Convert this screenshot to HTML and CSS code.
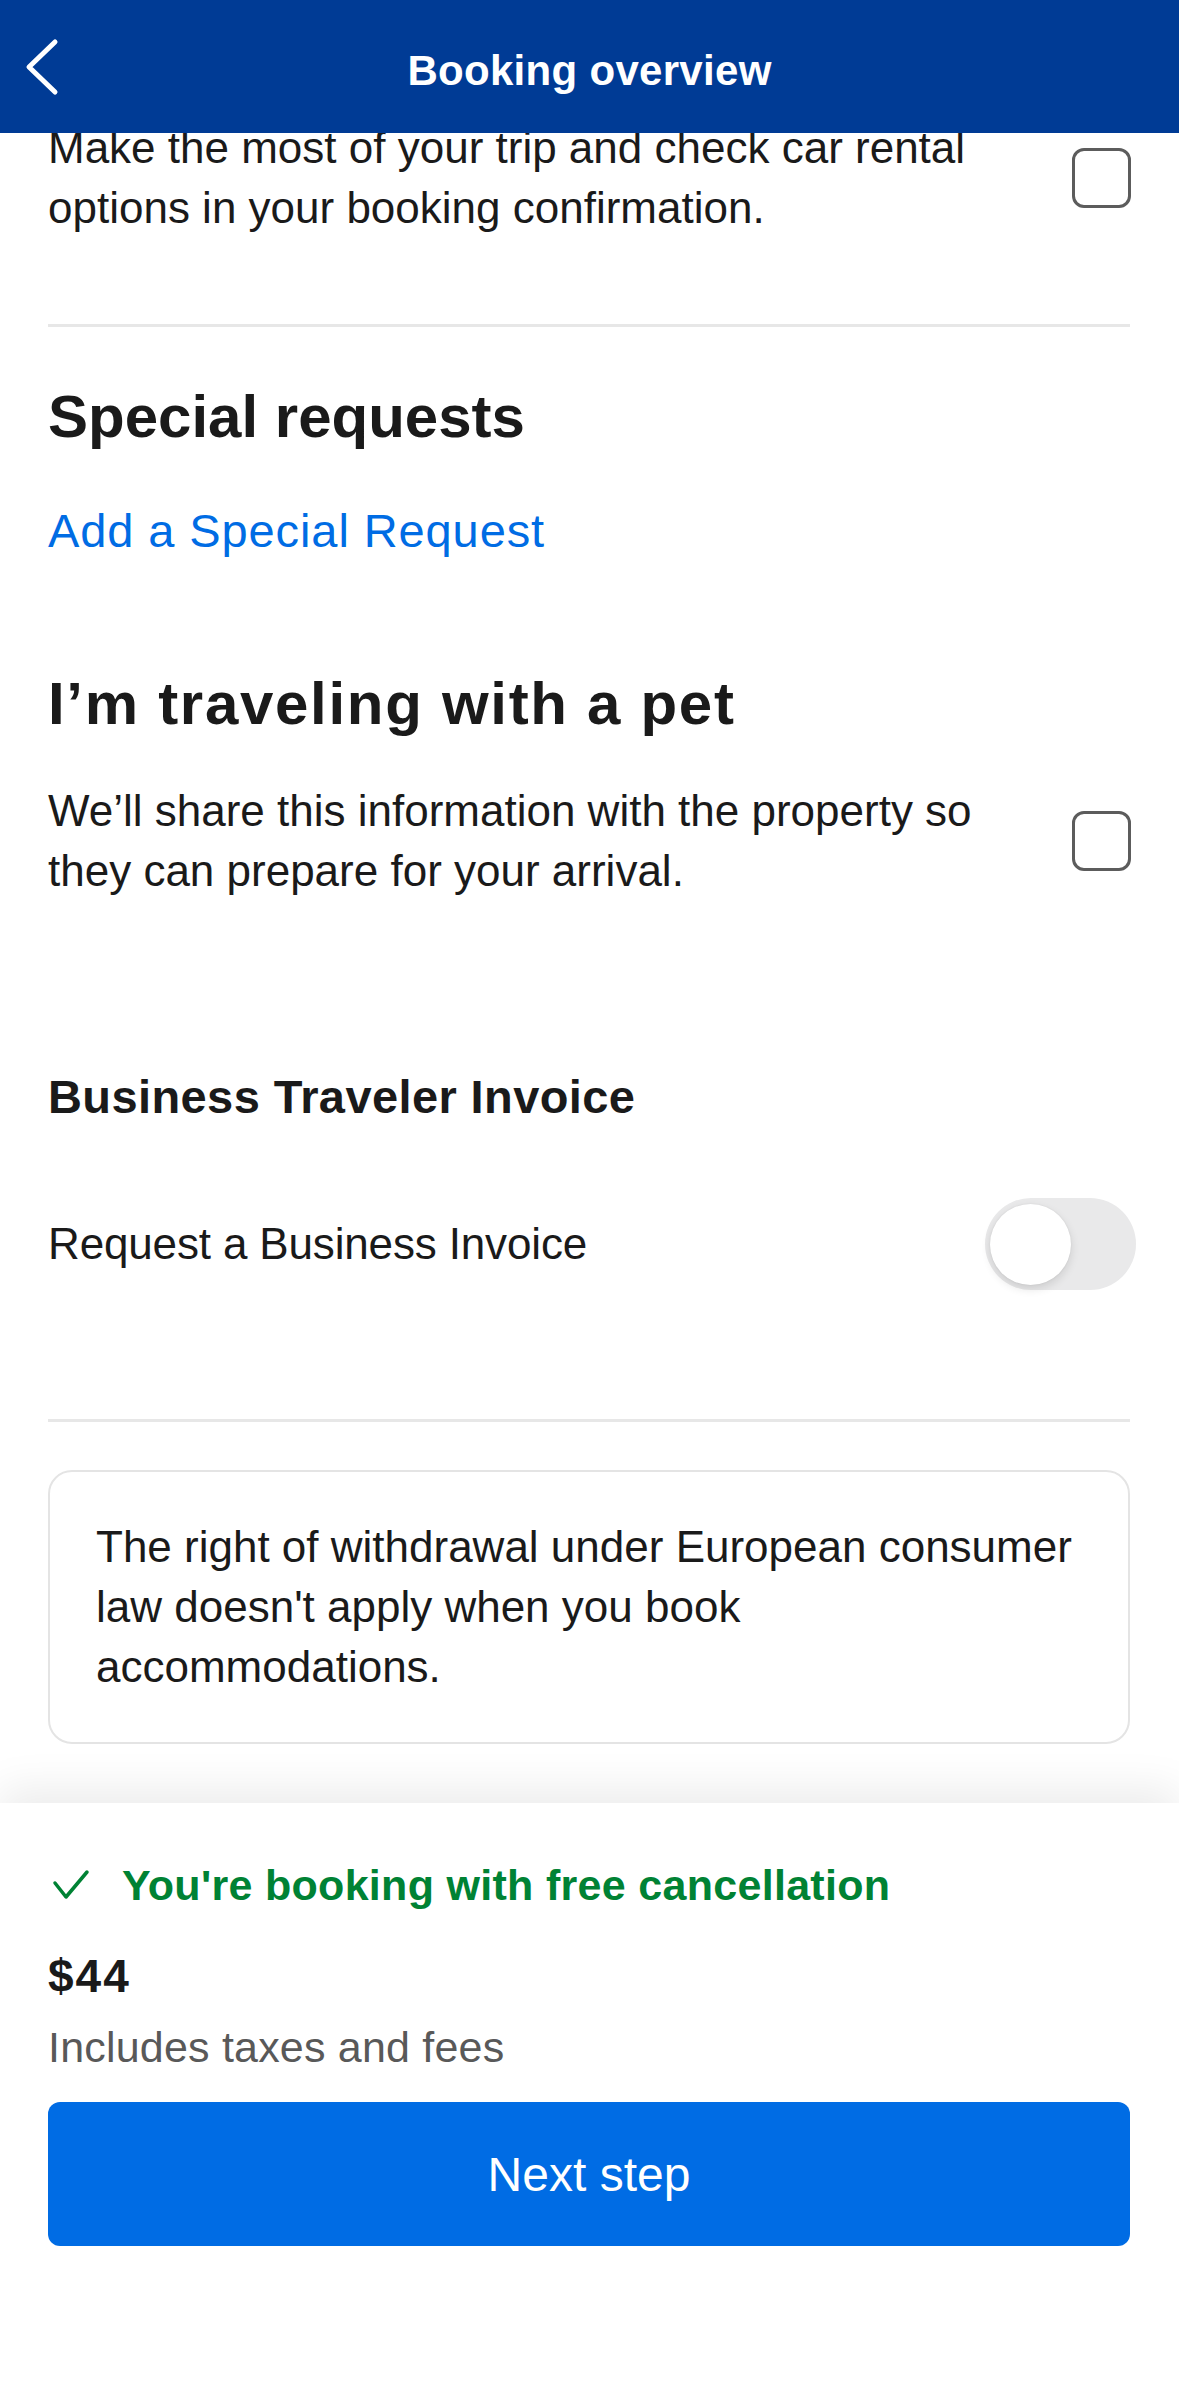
FILE: index.html
```html
<!DOCTYPE html>
<html lang="en" dir="ltr">
<head>
    <meta charset="utf-8">
    <title>Booking overview</title>
    <meta name="viewport" content="width=device-width, initial-scale=1.0">
    <link rel="stylesheet" href="styles.css">
</head>

<body>

    <header class="top-bar">
        <button class="back-button" aria-label="Back">
            <svg width="40" height="60" viewBox="0 0 40 60">
                <polyline points="31,5 5,30 31,55" fill="none" stroke="#fff" stroke-width="5" stroke-linecap="round" stroke-linejoin="round"/>
            </svg>
        </button>
        <h1>Booking overview</h1>
    </header>

    <main class="content">

        <div class="option-row first-row">
            <p>Make the most of your trip and check car rental options in your booking confirmation.</p>
            <span class="checkbox"></span>
        </div>

        <div class="divider first-divider"></div>

        <h2 class="section-title requests-title">Special requests</h2>
        <a class="link" href="#">Add a Special Request</a>

        <h2 class="section-title pet-title">I’m traveling with a pet</h2>
        <div class="option-row pet-row">
            <p>We’ll share this information with the property so they can prepare for your arrival.</p>
            <span class="checkbox"></span>
        </div>

        <h3 class="sub-title">Business Traveler Invoice</h3>
        <div class="toggle-row">
            <span>Request a Business Invoice</span>
            <span class="switch"><span class="knob"></span></span>
        </div>

        <div class="divider second-divider"></div>

        <div class="notice">
            <p>The right of withdrawal under European consumer law doesn't apply when you book accommodations.</p>
        </div>

    </main>

    <footer class="summary">
        <div class="free-cancel">
            <svg width="38" height="32" viewBox="0 0 38 32">
                <polyline points="3,14 14,28 35,3" fill="none" stroke="#008234" stroke-width="3.5" stroke-linecap="round" stroke-linejoin="round"/>
            </svg>
            <span>You're booking with free cancellation</span>
        </div>
        <div class="price">$44</div>
        <div class="price-note">Includes taxes and fees</div>
        <button class="next-button">Next step</button>
    </footer>

</body>
</html>
```

FILE: styles.css
```css
body {
    margin: 0;
    padding: 0;
    background-color: #fff;
    color: #1a1a1a;
    font-family: "Liberation Sans", Arial, sans-serif;
    font-size: 44px;
}

.top-bar {
    position: relative;
    z-index: 2;
    height: 133px;
    background-color: #003b95;
    display: flex;
    align-items: center;
    justify-content: center;
    padding-top: 8px;
    box-sizing: border-box;
}

.top-bar h1 {
    margin: 0;
    color: #fff;
    font-size: 42px;
    font-weight: bold;
    letter-spacing: 0.3px;
}

.back-button {
    position: absolute;
    left: 24px;
    top: 37px;
    padding: 0;
    border: none;
    background: none;
    cursor: pointer;
}

.back-button svg {
    display: block;
}

.content {
    padding: 0 49px 59px 48px;
}

.option-row {
    display: flex;
    align-items: center;
    gap: 40px;
}

.option-row p {
    flex: 1;
    margin: 0;
    line-height: 60px;
}

.first-row {
    position: relative;
    margin-top: -15px;
}

.checkbox {
    flex: none;
    width: 59px;
    height: 60px;
    border: 3px solid #5c5c5c;
    border-radius: 12px;
    box-sizing: border-box;
    margin-right: -1px;
}

.divider {
    height: 3px;
    background-color: #e7e7e7;
}

.first-divider {
    margin-top: 86px;
}

.second-divider {
    margin-top: 129px;
}

.section-title {
    margin: 0;
    font-size: 60px;
    line-height: 72px;
    font-weight: bold;
}

.requests-title {
    margin-top: 54px;
}

.link {
    display: block;
    margin-top: 48px;
    color: #006ce4;
    font-size: 47px;
    line-height: 60px;
    text-decoration: none;
    letter-spacing: 0.9px;
}

.pet-title {
    margin-top: 107px;
    letter-spacing: 1.7px;
}

.pet-row {
    margin-top: 41px;
}

.sub-title {
    margin: 166px 0 0;
    font-size: 47px;
    line-height: 60px;
    font-weight: bold;
    letter-spacing: 0.4px;
}

.toggle-row {
    margin-top: 71px;
    display: flex;
    align-items: center;
    justify-content: space-between;
    height: 92px;
    letter-spacing: -0.15px;
}

.switch {
    position: relative;
    width: 151px;
    height: 92px;
    margin-right: -6px;
    border-radius: 46px;
    background-color: #e9e9ea;
}

.switch .knob {
    position: absolute;
    left: 5px;
    top: 6px;
    width: 81px;
    height: 81px;
    border-radius: 50%;
    background-color: #fff;
    box-shadow: 0 4px 10px rgba(0, 0, 0, 0.12), 0 0 2px rgba(0, 0, 0, 0.08);
}

.notice {
    margin-top: 48px;
    border: 2px solid #e4e4e4;
    border-radius: 24px;
    padding: 45px 46px 45px 46px;
}

.notice p {
    margin: 0;
    line-height: 60px;
}

.summary {
    position: relative;
    padding: 52px 49px 150px 48px;
    background-color: #fff;
    box-shadow: 0 -14px 40px rgba(0, 0, 0, 0.08);
}

.free-cancel {
    display: flex;
    align-items: center;
    gap: 32px;
    height: 60px;
    color: #008234;
    font-size: 43px;
    font-weight: bold;
    letter-spacing: 0.3px;
}

.free-cancel svg {
    display: block;
    margin-left: 4px;
}

.price {
    margin-top: 31px;
    font-size: 46px;
    line-height: 60px;
    font-weight: bold;
    letter-spacing: 2px;
}

.price-note {
    margin-top: 13px;
    color: #595959;
    font-size: 43px;
    line-height: 56px;
    letter-spacing: 0.2px;
}

.next-button {
    display: block;
    width: 100%;
    height: 144px;
    margin-top: 27px;
    border: none;
    border-radius: 12px;
    background-color: #006ce4;
    color: #fff;
    font-family: "Liberation Sans", Arial, sans-serif;
    font-size: 48px;
    cursor: pointer;
}
```
